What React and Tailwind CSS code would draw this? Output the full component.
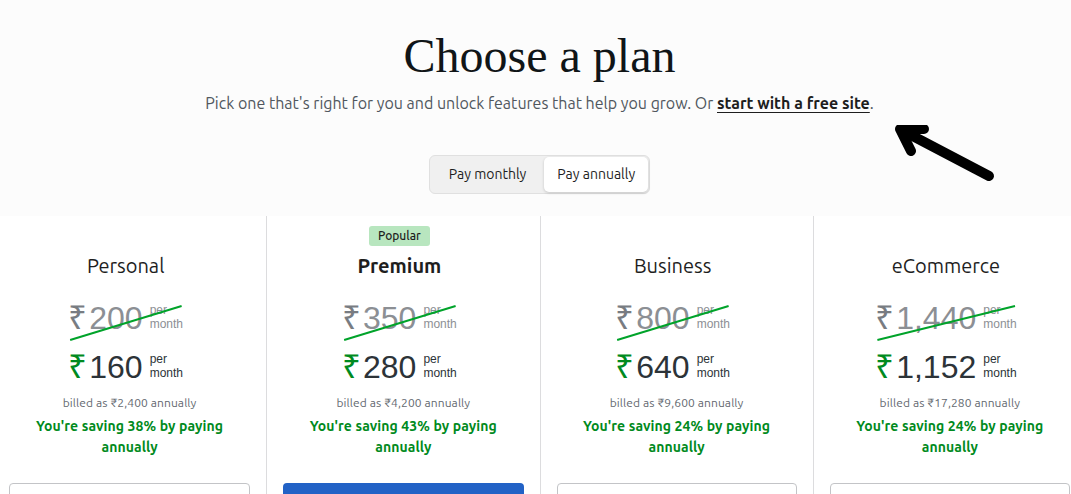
import React from 'react'

const plans = [
  { name: 'Personal', oldPrice: '200', price: '160', billed: '₹2,400', saving: '38%' },
  { name: 'Premium', oldPrice: '350', price: '280', billed: '₹4,200', saving: '43%', popular: true },
  { name: 'Business', oldPrice: '800', price: '640', billed: '₹9,600', saving: '24%' },
  { name: 'eCommerce', oldPrice: '1,440', price: '1,152', billed: '₹17,280', saving: '24%' },
]

const sans = "font-['Ubuntu','Open_Sans','Noto_Sans',sans-serif]"
const priceFont = "font-['Liberation_Sans','Arial',sans-serif]"

function Price({ amount, old }) {
  return (
    <div className={`relative flex items-start justify-center ${priceFont}`}>
      <span className={`text-[33px] leading-[36px] ${old ? 'text-[#787c82]' : 'text-[#008a20]'}`}>₹</span>
      <span className={`ml-[2px] text-[32px] leading-[36px] ${old ? 'text-[#8c8f94]' : 'text-[#2c3338]'}`}>{amount}</span>
      <span className={`ml-[7px] mt-[3px] flex flex-col text-left text-[12px] leading-[14px] ${old ? 'text-[#8c8f94]' : 'text-[#2c3338]'}`}>
        <span>per</span>
        <span>month</span>
      </span>
      {old && (
        <svg className="absolute left-[1px] top-[3px] h-[38px] w-[calc(100%-1px)]" viewBox="0 0 100 38" preserveAspectRatio="none">
          <line x1="1" y1="37" x2="99" y2="3" stroke="#00a32a" strokeWidth="2" vectorEffect="non-scaling-stroke" />
        </svg>
      )}
    </div>
  )
}

function PlanColumn({ plan }) {
  return (
    <div className="flex flex-col items-center border-l border-[#dcdcde] px-[16px] pt-[10px] first:border-l-0">
      <div className="flex w-full flex-col items-center pr-[8px]">
        <div className="flex h-[20px] items-center">
          {plan.popular && (
            <span className="rounded-[3px] bg-[#b8e6bf] px-[9px] text-[12px] font-medium leading-[20px] text-[#1e1e1e]">
              Popular
            </span>
          )}
        </div>
        <h2 className={`mt-[8px] text-[20px] leading-[24px] text-[#1e1e1e] ${plan.popular ? 'font-bold' : 'font-normal'}`}>
          {plan.name}
        </h2>
        <div className="mt-[22px]">
          <Price amount={plan.oldPrice} old />
        </div>
        <div className="mt-[13px]">
          <Price amount={plan.price} />
        </div>
      </div>
      <p className="mt-[10px] text-[12px] leading-[16px] tracking-[0.1px] text-[#646970]">billed as {plan.billed} annually</p>
      <p className="mt-[5px] max-w-[220px] text-center text-[14px] font-bold leading-[21px] tracking-[0.1px] text-[#008a20]">
        You're saving {plan.saving} by paying annually
      </p>
      <button
        className={`mt-[25px] h-[40px] w-full rounded-[4px] ${
          plan.popular ? 'bg-[#2262c6]' : 'border border-[#c3c4c7] bg-white'
        }`}
      />
    </div>
  )
}

export default function App() {
  return (
    <div className={`h-[494px] overflow-hidden bg-white ${sans}`}>
      <div className="-ml-[7px] w-[1093px]">
        <section className="flex h-[216px] flex-col items-center bg-[#fcfcfc] pt-[28px]">
          <h1 className="font-['Liberation_Serif',serif] text-[48px] font-normal leading-[56px] text-[#101517]">
            Choose a plan
          </h1>
          <p className="mt-[7px] text-[16px] leading-[24px] text-[#50575e]">
            Pick one that's right for you and unlock features that help you grow. Or{' '}
            <a className="font-semibold text-[#1e1e1e] underline underline-offset-[3px]">start with a free site</a>.
          </p>
          <div className="relative mt-[40px] flex">
            <div className="flex rounded-[6px] border border-[#e0e0e0] bg-[#f0f0f0] p-[1px] text-[14px] text-[#1e1e1e]">
              <button className="h-[35px] px-[18px]">Pay monthly</button>
              <button className="h-[35px] rounded-[5px] bg-white px-[13px] shadow-[0_1px_3px_rgba(0,0,0,0.18)]">
                Pay annually
              </button>
            </div>
          </div>
        </section>
        <div className="relative">
          <svg className="absolute left-[900px] top-[-91px] h-[70px] w-[110px]" viewBox="0 0 110 70">
            <path d="M96 51 L14 8" stroke="#000" strokeWidth="10" strokeLinecap="round" fill="none" />
            <path d="M31 4 L7 4 L18 26" stroke="#000" strokeWidth="10" strokeLinecap="round" strokeLinejoin="round" fill="none" />
          </svg>
        </div>
        <div className="grid grid-cols-4">
          {plans.map((p) => (
            <PlanColumn key={p.name} plan={p} />
          ))}
        </div>
      </div>
    </div>
  )
}
